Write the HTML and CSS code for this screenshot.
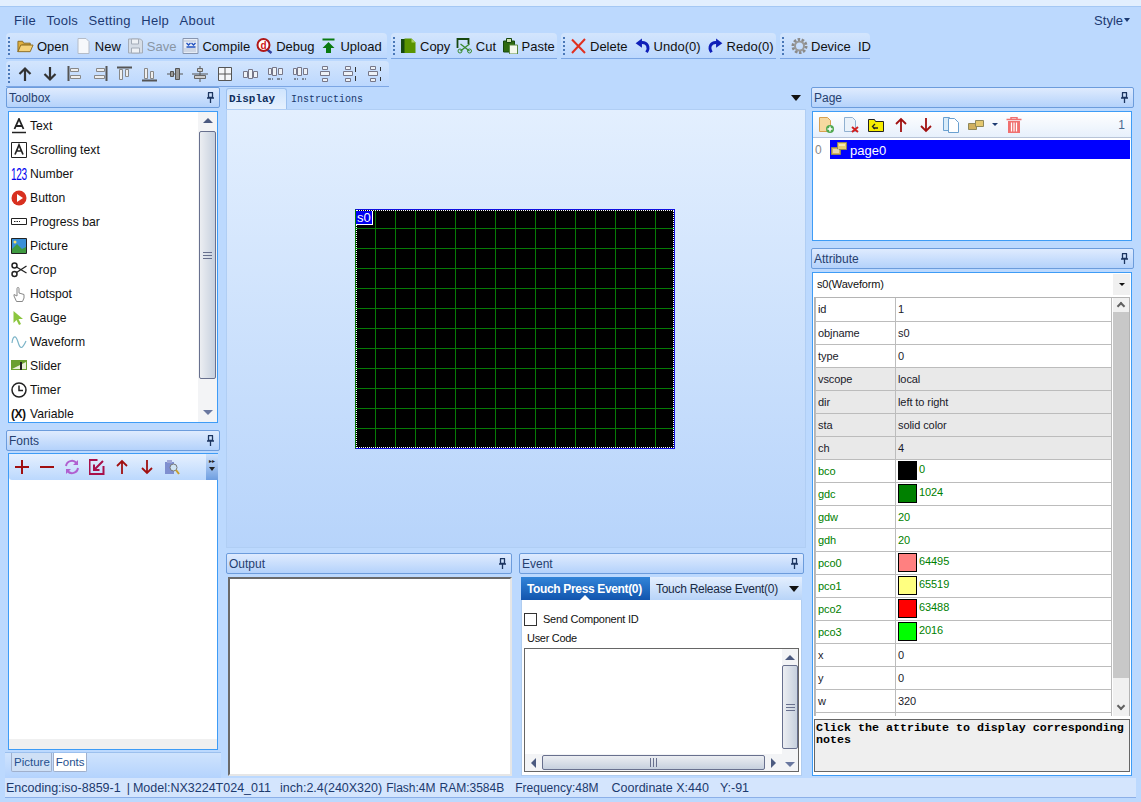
FILE: index.html
```html
<!DOCTYPE html>
<html>
  <head>
    <meta charset="UTF-8" />
    <title>Nextion Editor</title>
    <link rel="stylesheet" href="styles.css">
  </head>
  <body>
    <svg class="defs">
      <symbol id="pin" viewBox="0 0 9 11"><path d="M2 .5h5M2.5 .5v5h4v-5M1 6h7M4.5 6v5" fill="none" stroke="#1c3560" stroke-width="1.3"/></symbol>
      <symbol id="up-dark" viewBox="0 0 16 16"><path d="M8 15V3M2.5 8 8 2.5 13.500 8" fill="none" stroke="#333" stroke-width="2.200"/></symbol>
      <symbol id="down-dark" viewBox="0 0 16 16"><path d="M8 1v12M2.500 8 8 13.500 13.500 8" fill="none" stroke="#333" stroke-width="2.200"/></symbol>
      <symbol id="up-red" viewBox="0 0 16 16"><path d="M8 15V2M3 7l5-5 5 5" fill="none" stroke="#a01010" stroke-width="1.800"/></symbol>
      <symbol id="down-red" viewBox="0 0 16 16"><path d="M8 1v13M3 9l5 5 5-5" fill="none" stroke="#a01010" stroke-width="1.800"/></symbol>
    </svg>

    <div class="top-strip"></div>

    <nav class="menu-bar">
      <span>File</span><span>Tools</span><span>Setting</span><span>Help</span><span>About</span>
      <span class="menu-style">Style<i class="caret"></i></span>
    </nav>

    <div class="toolbar-row">
      <div class="toolbar tb-file">
        <i class="grip"></i>
        <a class="tool"><svg viewBox="0 0 18 16"><path d="M1 14V3h5l1 2h7v2H5z" fill="#e0b040" stroke="#8a6a20"/><path d="M1 14 4 7h13l-3 7z" fill="#f4d27a" stroke="#8a6a20"/></svg>Open</a>
        <a class="tool"><svg viewBox="0 0 16 16"><path d="M2.500 .5h8l3 3v12h-11z" fill="#f6f8fb" stroke="#b4bcc8"/></svg>New</a>
        <a class="tool disabled"><svg viewBox="0 0 16 16"><path d="M1 1h12l2 2v12H1z" fill="#d6dde6" stroke="#a4acb8"/><path d="M4 1h7v5H4zM4 10h8v5H4z" fill="#eef1f5" stroke="#a4acb8"/></svg>Save</a>
        <a class="tool"><svg viewBox="0 0 16 16"><path d="M.5 .5h15v15H.5z" fill="#e6ecf6" stroke="#8896b0"/><path d="M2 3h12M2 11h12M2 13h12" stroke="#8896b0" stroke-dasharray="1 1"/><path d="M4 5l2 2 2-2M9 5l2 2 2-2M4 9h9" fill="none" stroke="#2050c0" stroke-width="1.300"/></svg>Compile</a>
        <a class="tool"><svg viewBox="0 0 16 16"><path d="m10 11 5 4" stroke="#3040a0" stroke-width="2.500"/><circle cx="7" cy="7" r="6" fill="#fff" stroke="#b01818" stroke-width="2"/><text x="7" y="10.500" class="debug-d">d</text></svg>Debug</a>
        <a class="tool upload"><svg viewBox="0 0 14 16"><path d="M1 1.500h12" stroke="#0a7a10" stroke-width="2"/><path d="M7 4 13 10H9.500v5h-5v-5H1z" fill="#0a7a10"/></svg>Upload</a>
      </div>
      <div class="toolbar tb-edit">
        <i class="grip"></i>
        <a class="tool"><svg viewBox="0 0 16 16"><path d="M.5 1H5v14H.5z" fill="#17480f"/><path d="M4 .5h7l4 4V15H4z" fill="#5a9400"/><path d="M11 .5v4h4" fill="#a8d060"/></svg>Copy</a>
        <a class="tool"><svg viewBox="0 0 16 16"><path d="M1 10V1h11v5" fill="none" stroke="#17480f" stroke-width="1.800"/><path d="M4 6l9 7M13 6l-9 7" stroke="#3a8a30" stroke-width="1.300"/><circle cx="3.500" cy="13" r="2" fill="none" stroke="#3a8a30"/><circle cx="13" cy="13" r="2" fill="none" stroke="#3a8a30"/></svg>Cut</a>
        <a class="tool"><svg viewBox="0 0 16 16"><path d="M1 3h11v11H1z" fill="#2f6a10" stroke="#17480f"/><path d="M4 .5h5v4H4z" fill="#cfe0b0" stroke="#17480f"/><path d="M7 7h8v9H7z" fill="#f4f8ec" stroke="#5a8a40"/></svg>Paste</a>
      </div>
      <div class="toolbar tb-history">
        <i class="grip"></i>
        <a class="tool"><svg viewBox="0 0 16 16"><path d="M1.500 1.500 14.500 15M14.500 1 1.500 15" stroke="#e03020" stroke-width="2"/></svg>Delete</a>
        <a class="tool"><svg viewBox="0 0 14 14"><path d="M10.500 12.500C13.500 8 11 3.500 6 4" fill="none" stroke="#1020b8" stroke-width="2.500"/><path d="M1 4.500 6.500 .5v8z" fill="#1020b8"/></svg>Undo(0)</a>
        <a class="tool"><svg viewBox="0 0 14 14"><path d="M3.500 12.500C.5 8 3 3.500 8 4" fill="none" stroke="#1020b8" stroke-width="2.500"/><path d="M13 4.500 7.500 .5v8z" fill="#1020b8"/></svg>Redo(0)</a>
      </div>
      <div class="toolbar tb-device">
        <i class="grip"></i>
        <a class="tool"><svg viewBox="0 0 16 16"><circle cx="8" cy="8" r="6.500" fill="none" stroke="#8a8a8a" stroke-width="3" stroke-dasharray="2.500 1.500"/><circle cx="8" cy="8" r="4.500" fill="none" stroke="#999" stroke-width="2"/></svg>Device&nbsp; ID</a>
      </div>
    </div>

    <div class="toolbar tb-align">
      <i class="grip"></i>
      <a class="tool-sq"><svg viewBox="0 0 16 16"><use href="#up-dark"/></svg></a>
      <a class="tool-sq"><svg viewBox="0 0 16 16"><use href="#down-dark"/></svg></a>
      <a class="tool-sq"><svg viewBox="0 0 16 16"><path d="M1.500 0v15" stroke="#555" stroke-width="2"/><path d="M3.500 2.500h8v3h-8zM3.500 9.500h10v3h-10z" fill="#eee" stroke="#888"/></svg></a>
      <a class="tool-sq"><svg viewBox="0 0 16 16"><path d="M14.500 0v15" stroke="#555" stroke-width="2"/><path d="M4.500 2.500h8v3h-8zM2.500 9.500h10v3h-10z" fill="#eee" stroke="#888"/></svg></a>
      <a class="tool-sq"><svg viewBox="0 0 16 16"><path d="M0 1.500h15" stroke="#555" stroke-width="2"/><path d="M2.500 3.500h3v10h-3zM8.500 3.500h3v7h-3z" fill="#eee" stroke="#888"/></svg></a>
      <a class="tool-sq"><svg viewBox="0 0 16 16"><path d="M0 14.500h15" stroke="#555" stroke-width="2"/><path d="M2.500 2.500h3v10h-3zM8.500 5.500h3v7h-3z" fill="#eee" stroke="#888"/></svg></a>
      <a class="tool-sq"><svg viewBox="0 0 16 16"><path d="M0 8h16" stroke="#555"/><path d="M3.500 5.500h3v5h-3zM8.500 2.500h4v11h-4z" fill="#999" stroke="#555"/></svg></a>
      <a class="tool-sq"><svg viewBox="0 0 16 16"><path d="M8 0v16M0 8h16" stroke="#555"/><path d="M5.500 2.500h5v3h-5zM2.500 9.500h11v3h-11z" fill="#ccc" stroke="#666"/></svg></a>
      <a class="tool-sq"><svg viewBox="0 0 16 16"><path d="M1.500 1.500h13v13h-13z" fill="#f4f6f9" stroke="#555"/><path d="M8 2v12M2 8h12" stroke="#555"/></svg></a>
      <a class="tool-sq"><svg viewBox="0 0 16 16"><path d="M1.500 5.500h4v6h-4zM6.500 3.500h4v9h-4zM11.500 5.500h4v6h-4z" fill="#eef2f7" stroke="#778"/></svg></a>
      <a class="tool-sq"><svg viewBox="0 0 16 16"><path d="M1.500 2.500h3v6h-3zM5.500 1.500h4v8h-4zM11.500 2.500h4v6h-4z" fill="#eef2f7" stroke="#778"/><path d="M1 13h5M10 13h5" stroke="#333" stroke-dasharray="3 1"/></svg></a>
      <a class="tool-sq"><svg viewBox="0 0 16 16"><path d="M1.500 2.500h3v6h-3zM5.500 1.500h4v8h-4zM11.500 2.500h4v6h-4z" fill="#eef2f7" stroke="#778"/><path d="M2 13h4M10 13h4" stroke="#333" stroke-dasharray="2 1"/></svg></a>
      <a class="tool-sq"><svg viewBox="0 0 16 16"><path d="M5.500 .5h5v3h-5zM3.500 5.500h9v4h-9zM5.500 12.500h5v3h-5z" fill="#eef2f7" stroke="#778"/></svg></a>
      <a class="tool-sq"><svg viewBox="0 0 16 16"><path d="M3.500 .5h5v3h-5zM1.500 5.500h9v4h-9zM3.500 12.500h5v3h-5z" fill="#eef2f7" stroke="#778"/><path d="M13.500 1v5M13.500 10v5" stroke="#333"/></svg></a>
      <a class="tool-sq"><svg viewBox="0 0 16 16"><path d="M3.500 .5h5v3h-5zM1.500 5.500h9v4h-9zM3.500 12.500h5v3h-5z" fill="#eef2f7" stroke="#778"/><path d="M13.500 1v4M13.500 11v4" stroke="#333"/></svg></a>
    </div>

    <main class="workspace">
      <section class="col-left">
        <header class="panel-head">Toolbox<svg class="pin"><use href="#pin"/></svg></header>
        <div class="box toolbox">
          <ul class="tool-list">
            <li><svg viewBox="0 0 16 16"><path d="M3.500 11 8 1l4.500 10M5 8h6" fill="none" stroke="#222" stroke-width="1.800"/><path d="M1 14.500h14" stroke="#222" stroke-width="1.500"/></svg>Text</li>
            <li><svg viewBox="0 0 16 16"><path d="M.5 .5h15v15H.5z" fill="#fff" stroke="#222"/><path d="M4 12.500 8 3l4 9.500M5.500 9h5" fill="none" stroke="#222" stroke-width="1.700"/></svg>Scrolling text</li>
            <li><span class="num-glyph">123</span>Number</li>
            <li><svg viewBox="0 0 16 16"><circle cx="8" cy="8" r="7.500" fill="#d83020"/><path d="M6 4v8l6-4z" fill="#fff"/></svg>Button</li>
            <li><svg viewBox="0 0 16 16"><path d="M.5 4.500h15v6H.5z" fill="#fff" stroke="#222"/><path d="M3 7.500h6" stroke="#222" stroke-dasharray="1.500 1"/></svg>Progress bar</li>
            <li><svg viewBox="0 0 16 16"><path d="M.5 .5h15v15H.5z" fill="#3a90d8" stroke="#222"/><circle cx="4" cy="4" r="1.500" fill="#f4e070"/><path d="M1 15V11l5-5 5 5 4-2v6z" fill="#3f9a40"/></svg>Picture</li>
            <li><svg viewBox="0 0 16 16"><circle cx="3.500" cy="3.500" r="2.500" fill="none" stroke="#222" stroke-width="1.500"/><circle cx="3.500" cy="12" r="2.500" fill="none" stroke="#222" stroke-width="1.500"/><path d="m5.500 5 10 6M5.500 10.500 15.500 4" stroke="#222" stroke-width="1.300"/></svg>Crop</li>
            <li><svg viewBox="0 0 16 16"><path d="M6 8V2.500a1 1 0 0 1 2 0V7l5 1.500V12l-1.500 3.500h-6L3 10V8.500l3 1.500z" fill="#fff" stroke="#888"/></svg>Hotspot</li>
            <li><svg viewBox="0 0 16 16"><path d="M2.500 1v12l3-3 2.500 5 2-1-2.500-5H12z" fill="#8cc63f"/></svg>Gauge</li>
            <li><svg viewBox="0 0 16 16"><path d="M1 9C2 1 5 1 7 8s4 8 8-1" fill="none" stroke="#7cb4c8" stroke-width="1.200"/></svg>Waveform</li>
            <li><svg viewBox="0 0 16 16"><path d="M0 2h16v10H0z" fill="#6aa030"/><path d="M1 11 15 4v7z" fill="#e8f0d8"/><path d="M9 4h2v8H9z" fill="#222"/></svg>Slider</li>
            <li><svg viewBox="0 0 16 16"><circle cx="8" cy="8" r="7" fill="#fff" stroke="#222" stroke-width="1.500"/><path d="M8 3.500V8.500h4" fill="none" stroke="#222" stroke-width="1.500"/></svg>Timer</li>
            <li><span class="var-glyph">(X)</span>Variable</li>
          </ul>
          <div class="vscroll tool-scroll">
            <i class="arrow-up"></i>
            <div class="thumb"><i class="thumb-grip"></i></div>
            <i class="arrow-down"></i>
          </div>
        </div>

        <header class="panel-head fonts-head">Fonts<svg class="pin"><use href="#pin"/></svg></header>
        <div class="box fonts">
          <div class="mini-toolbar">
            <a class="tool-sq"><svg viewBox="0 0 16 16"><path d="M8 1v14M1 8h14" stroke="#a01010" stroke-width="2"/></svg></a>
            <a class="tool-sq"><svg viewBox="0 0 16 16"><path d="M1 8h14" stroke="#a01010" stroke-width="2"/></svg></a>
            <a class="tool-sq"><svg viewBox="0 0 16 16"><path d="M2 7a6 6 0 0 1 10.500-3M14 9a6 6 0 0 1-10.500 3" fill="none" stroke="#b060d0" stroke-width="2"/><path d="M14 1v5H9zM2 15v-5h5z" fill="#b060d0"/></svg></a>
            <a class="tool-sq"><svg viewBox="0 0 16 16"><path d="M14.500 7v8h-14V1h8" fill="none" stroke="#a8104a" stroke-width="2"/><path d="M14 2 5 11M5 5.500V11h5.500" fill="none" stroke="#a8104a" stroke-width="2"/></svg></a>
            <a class="tool-sq"><svg viewBox="0 0 16 16"><use href="#up-red"/></svg></a>
            <a class="tool-sq"><svg viewBox="0 0 16 16"><use href="#down-red"/></svg></a>
            <a class="tool-sq"><svg viewBox="0 0 16 16"><path d="M1 3h9v12H1z" fill="#7f8fd0"/><path d="M3 1h5v3H3z" fill="#a0a8d8"/><circle cx="9.500" cy="8.500" r="3.500" fill="#cfe4f4" stroke="#777"/><path d="m12 11 3 4" stroke="#c8a030" stroke-width="2"/></svg></a>
            <span class="overflow-btn"><i class="overflow-dots">▸▸</i><i class="overflow-caret"></i></span>
          </div>
          <div class="fonts-body"></div>
          <div class="fonts-foot"></div>
        </div>

        <div class="side-tabs">
          <span class="side-tab">Picture</span>
          <span class="side-tab on">Fonts</span>
        </div>
      </section>

      <section class="col-center">
        <div class="doc-tabs">
          <span class="doc-tab on">Display</span>
          <span class="doc-tab">Instructions</span>
          <i class="tab-menu"></i>
        </div>
        <div class="stage">
          <div class="canvas">
            <span class="comp-label">s0</span>
          </div>
        </div>
        <div class="bottom-panels">
          <div class="bottom-panel">
            <header class="panel-head">Output<svg class="pin"><use href="#pin"/></svg></header>
            <div class="output-box"></div>
          </div>
          <div class="bottom-panel">
            <header class="panel-head">Event<svg class="pin"><use href="#pin"/></svg></header>
            <div class="event-box">
              <div class="event-tabs">
                <span class="event-tab on">Touch Press Event(0)</span>
                <span class="event-tab">Touch Release Event(0)</span>
                <i class="tab-menu"></i>
              </div>
              <div class="event-body">
                <label class="send-id"><i class="check"></i>Send Component ID</label>
                <div class="code-label">User Code</div>
                <div class="code-box">
                  <div class="code-main">
                    <div class="code-area"></div>
                    <div class="hscroll">
                      <i class="arrow-left"></i>
                      <div class="hthumb"><i class="hthumb-grip"></i></div>
                      <i class="arrow-right"></i>
                    </div>
                  </div>
                  <div class="vscroll code-scroll">
                    <i class="arrow-up"></i>
                    <div class="thumb"><i class="thumb-grip"></i></div>
                    <i class="arrow-down"></i>
                  </div>
                </div>
              </div>
            </div>
          </div>
        </div>
      </section>

      <section class="col-right">
        <header class="panel-head">Page<svg class="pin"><use href="#pin"/></svg></header>
        <div class="box pages">
          <div class="page-toolbar">
            <a class="tool-sq"><svg viewBox="0 0 16 16"><path d="M1.500 .5h8l3 3v11h-11z" fill="#f6d9a0" stroke="#d8a050"/><circle cx="12" cy="12" r="4" fill="#50a850"/><path d="M12 9.500v5M9.500 12h5" stroke="#fff" stroke-width="1.500"/></svg></a>
            <a class="tool-sq"><svg viewBox="0 0 16 16"><path d="M1.500 .5h8l3 3v11h-11z" fill="#eaf2fa" stroke="#90b0d0"/><path d="m9 10 6 5M15 10l-6 5" stroke="#d02020" stroke-width="2"/></svg></a>
            <a class="tool-sq"><svg viewBox="0 0 16 16"><path d="M.5 2.500h6l1 2h8v10H.5z" fill="#f6ec00" stroke="#222"/><path d="M10 11H5M7 7 4.500 9.500 7 12" fill="none" stroke="#222" stroke-width="1.300"/></svg></a>
            <a class="tool-sq"><svg viewBox="0 0 16 16"><use href="#up-red"/></svg></a>
            <a class="tool-sq"><svg viewBox="0 0 16 16"><use href="#down-red"/></svg></a>
            <a class="tool-sq"><svg viewBox="0 0 16 16"><path d="M.5 .5h6v13h-6z" fill="#d8ecfa" stroke="#6aa0d0"/><path d="M5.500 1.500h6l4 4v10h-10z" fill="#fff" stroke="#6aa0d0"/></svg></a>
            <a class="tool-sq"><svg viewBox="0 0 16 16"><path d="M.5 6.500h8v6h-8z" fill="#d0b060" stroke="#90885a"/><path d="M7.500 3.500h8v6h-8z" fill="#e4c870" stroke="#90885a"/></svg></a>
            <i class="page-caret"></i>
            <a class="tool-sq trash"><svg viewBox="0 0 16 16"><path d="M5 2V.5h6V2M.5 2.500h15" fill="none" stroke="#f07070" stroke-width="1.500"/><path d="M2 4h12v12H2z" fill="#f07070"/><path d="M5.500 5.500v9M8 5.500v9M10.500 5.500v9" stroke="#fff" stroke-width="1.200"/></svg></a>
            <span class="page-count">1</span>
          </div>
          <div class="page-row">
            <span class="page-no">0</span>
            <div class="page-item">
              <svg viewBox="0 0 16 13"><path d="M.5 5.500h9v7h-9z" fill="#d0b060" stroke="#90885a"/><path d="M6.500 .5h9v7h-9z" fill="#e8cc70" stroke="#90885a"/><path d="M2 8h6M2 10h6M8 3h6" stroke="#fff"/></svg>
              page0
            </div>
          </div>
        </div>

        <header class="panel-head attr-head">Attribute<svg class="pin"><use href="#pin"/></svg></header>
        <div class="box attrs">
          <div class="combo">s0(Waveform)<span class="combo-btn"><i class="caret-dark"></i></span></div>
          <div class="attr-wrap">
            <div class="attr-scrollpane">
              <table class="attr-table">
                <tr><td>id</td><td>1</td></tr>
                <tr><td>objname</td><td>s0</td></tr>
                <tr><td>type</td><td>0</td></tr>
                <tr class="ro"><td>vscope</td><td>local</td></tr>
                <tr class="ro"><td>dir</td><td>left to right</td></tr>
                <tr class="ro"><td>sta</td><td>solid color</td></tr>
                <tr class="ro"><td>ch</td><td>4</td></tr>
                <tr class="live"><td>bco</td><td><i class="swatch c-black"></i>0</td></tr>
                <tr class="live"><td>gdc</td><td><i class="swatch c-green"></i>1024</td></tr>
                <tr class="live"><td>gdw</td><td>20</td></tr>
                <tr class="live"><td>gdh</td><td>20</td></tr>
                <tr class="live"><td>pco0</td><td><i class="swatch c-pink"></i>64495</td></tr>
                <tr class="live"><td>pco1</td><td><i class="swatch c-yellow"></i>65519</td></tr>
                <tr class="live"><td>pco2</td><td><i class="swatch c-red"></i>63488</td></tr>
                <tr class="live"><td>pco3</td><td><i class="swatch c-lime"></i>2016</td></tr>
                <tr><td>x</td><td>0</td></tr>
                <tr><td>y</td><td>0</td></tr>
                <tr><td>w</td><td>320</td></tr>
                <tr><td></td><td></td></tr>
              </table>
            </div>
            <div class="attr-scroll">
              <i class="chev-up"></i>
              <div class="attr-thumb"></div>
              <i class="chev-down"></i>
            </div>
          </div>
          <div class="notes">Click the attribute to display corresponding notes</div>
        </div>
      </section>
    </main>

    <footer class="status-bar">
      <span>Encoding:iso-8859-1</span>
      <span class="st-sep">|</span>
      <span class="st-model">Model:NX3224T024_011</span>
      <span class="st-inch">inch:2.4(240X320)</span>
      <span class="st-flash">Flash:4M</span>
      <span class="st-ram">RAM:3584B</span>
      <span class="st-freq">Frequency:48M</span>
      <span class="st-coord">Coordinate X:440</span>
      <span class="st-y">Y:-91</span>
    </footer>
  </body>
</html>
```

FILE: styles.css
```css
* {
  margin: 0;
  padding: 0;
  box-sizing: border-box;
}
html, body {
  height: 100%;
}
body {
  width: 1141px;
  height: 802px;
  overflow: hidden;
  background: #bcd9fe;
  font-family: "Liberation Sans", Arial, sans-serif;
  font-size: 12px;
  color: #111;
}
i {
  display: block;
  font-style: normal;
}
.defs {
  display: none;
}

/* top area */
.top-strip {
  height: 7px;
  background: #e2effe;
  border-bottom: 1px solid #a4c8f4;
}
.menu-bar {
  height: 26px;
  display: flex;
  align-items: center;
  gap: 10.500px;
  padding: 0 11px 0 14px;
  font-size: 13px;
  letter-spacing: 0.25px;
  color: #1c3a72;
}
.menu-style {
  margin-left: auto;
  display: flex;
  align-items: center;
  letter-spacing: 0;
}
.caret {
  margin-left: 1px;
  border: 3.5px solid transparent;
  border-top: 4px solid #1c3a72;
  border-bottom: 0;
}
.toolbar-row {
  display: flex;
  gap: 4px;
  padding-left: 6px;
}
.toolbar {
  height: 26px;
  display: flex;
  align-items: center;
  padding-top: 1px;
  border-radius: 4px 4px 0 0;
  border-bottom: 1px solid #7ca6e4;
  background: linear-gradient(#d3e5fd, #bcd8fe);
  font-size: 13px;
  color: #111;
}
.grip {
  width: 2px;
  height: 18px;
  flex: none;
  margin: 0 7px 0 2px;
  background: repeating-linear-gradient(#4a78b8 0 2px, transparent 2px 4px);
}
.tool {
  display: flex;
  align-items: center;
  gap: 3px;
  margin-right: 6px;
  white-space: nowrap;
}
.tool:last-child {
  margin-right: 0;
}
.tool svg {
  width: 17px;
  height: 16px;
  flex: none;
}
.tool.disabled {
  color: #8a96a4;
}
.debug-d {
  font: bold 10px "Liberation Sans", sans-serif;
  fill: #d01818;
  text-anchor: middle;
}
.tb-file {
  width: 381px;
  flex: none;
}
.tb-edit {
  width: 166px;
  flex: none;
}
.tb-history {
  width: 215px;
  flex: none;
}
.tb-device {
  width: 90px;
  flex: none;
}
.tb-edit .grip {
  margin-right: 5px;
}
.tb-edit .tool {
  margin-right: 5.500px;
}
.tb-edit .tool:last-child {
  margin-right: 0;
}
.tb-history .grip {
  margin-right: 5px;
}
.tb-device .grip {
  margin-right: 5px;
}
.tb-device .tool {
  margin-left: 2px;
}
.tb-align {
  width: 383px;
  margin: 2px 0 0 6px;
  padding-top: 0;
}
.tb-align .grip {
  margin-right: 2px;
}
.tool-sq {
  width: 25px;
  height: 16px;
  flex: none;
  display: flex;
  justify-content: center;
}
.tool-sq svg {
  width: 16px;
  height: 16px;
}

/* main columns */
.workspace {
  height: 691px;
  display: grid;
  grid-template-columns: 214px 1fr 323px;
  padding: 0 7px 0 6px;
}
.col-left, .col-right {
  display: flex;
  flex-direction: column;
  min-height: 0;
}
.col-center {
  display: flex;
  flex-direction: column;
  margin: 0 5px 0 6px;
  min-height: 0;
}
.panel-head {
  height: 21px;
  flex: none;
  display: flex;
  align-items: center;
  justify-content: space-between;
  padding: 0 4px 0 2px;
  border: 1px solid #6c9cdc;
  border-radius: 2px;
  background: linear-gradient(#dfebfe, #b4d2fb);
  color: #26406f;
}
.pin {
  width: 9px;
  height: 11px;
}
.box {
  background: #fff;
  border: 1px solid #3e9cf6;
}

/* toolbox */
.toolbox {
  height: 312px;
  margin: 3px 2px 0;
  display: flex;
  flex: none;
}
.tool-list {
  flex: 1;
  list-style: none;
  padding-top: 2px;
  overflow: hidden;
  font-size: 12.200px;
}
.tool-list li {
  height: 24px;
  display: flex;
  align-items: center;
  gap: 3px;
  padding-left: 2px;
}
.tool-list svg {
  width: 16px;
  height: 16px;
  flex: none;
}
.num-glyph {
  width: 16px;
  color: #0000f0;
  font-size: 14px;
  letter-spacing: -0.5px;
  white-space: nowrap;
  transform: scale(0.72, 1.2);
  transform-origin: left center;
}
.var-glyph {
  width: 16px;
  font-weight: bold;
  font-size: 12px;
  letter-spacing: -0.500px;
  white-space: nowrap;
}
.vscroll {
  display: flex;
  flex-direction: column;
  align-items: center;
  background: #f3f4f6;
}
.tool-scroll {
  width: 19px;
  padding: 6px 1px 7px;
}
.tool-scroll .thumb {
  margin: 8px 0 0;
  height: 248px;
}
.thumb {
  width: 100%;
  flex: none;
  display: flex;
  align-items: center;
  justify-content: center;
  border: 1px solid #68708e;
  border-radius: 2px;
  background: linear-gradient(to right, #eceef2, #c6d0de);
}
.thumb-grip {
  width: 9px;
  height: 7px;
  background: repeating-linear-gradient(#68708e 0 1px, transparent 1px 3px);
}
.arrow-up {
  border: 5px solid transparent;
  border-bottom: 5px solid #4c5a80;
  border-top: 0;
  flex: none;
}
.arrow-down {
  margin-top: auto;
  border: 5px solid transparent;
  border-top: 5px solid #6a78a0;
  border-bottom: 0;
  flex: none;
}

/* fonts */
.fonts-head {
  margin-top: 7px;
}
.fonts {
  flex: 1;
  min-height: 0;
  margin: 2px 2px 0;
  display: flex;
  flex-direction: column;
}
.mini-toolbar {
  height: 26px;
  flex: none;
  display: flex;
  align-items: center;
  border-radius: 0 0 3px 3px;
  background: linear-gradient(#e6f0fe, #bbd8fd);
}
.overflow-btn {
  width: 12px;
  height: 26px;
  margin-left: auto;
  margin-right: -1px;
  background: linear-gradient(#cfe2fc, #6e9ee0);
  display: flex;
  flex-direction: column;
  align-items: center;
}
.overflow-dots {
  font-size: 6px;
  color: #222;
  margin-top: 3px;
}
.overflow-caret {
  margin-top: 3px;
  border: 3.500px solid transparent;
  border-top: 4px solid #222;
  border-bottom: 0;
}
.fonts-body {
  flex: 1;
}
.fonts-foot {
  height: 10px;
  background: #f0f0f0;
}
.side-tabs {
  height: 26px;
  flex: none;
  margin: 2px -1px 0 -1px;
  padding: 0 0 0 6px;
  display: flex;
  gap: 1px;
  align-items: flex-start;
  background: linear-gradient(#cfe3fd, #b4d3fd);
  border-top: 1px solid #9cc0ee;
  font-size: 11.500px;
}
.side-tab {
  height: 19px;
  padding: 0 1px 0 2px;
  line-height: 18px;
  color: #26508f;
  background: #cfe0f6;
  border: 1px solid #a0b0cc;
  border-top: 0;
  border-radius: 0 0 2px 2px;
}
.side-tab.on {
  background: #fff;
}

/* center */
.doc-tabs {
  height: 22px;
  flex: none;
  display: flex;
  align-items: flex-end;
  padding-top: 1px;
}
.doc-tab {
  height: 21px;
  line-height: 23px;
  padding: 0 4px;
  font-family: "Liberation Mono", monospace;
  font-size: 10px;
  color: #1a3a6e;
}
.doc-tab.on {
  width: 61px;
  padding-left: 2px;
  line-height: 21px;
  font-weight: bold;
  font-size: 11px;
  background: linear-gradient(#cfe4fd, #e6f1fe);
  border: 1px solid #9cc0ee;
  border-bottom: 0;
  border-radius: 3px 3px 0 0;
  color: #10305e;
}
.tab-menu {
  border: 5px solid transparent;
  border-top: 6px solid #111;
  border-bottom: 0;
  margin-left: auto;
  margin-right: 5px;
  margin-bottom: 2px;
  align-self: center;
}
.stage {
  height: 439px;
  flex: none;
  display: flex;
  align-items: center;
  justify-content: center;
  padding-right: 2px;
  border: 1px solid #b0cef4;
  background: linear-gradient(#e3effe, #b7d4fb);
}
.canvas {
  width: 320px;
  height: 240px;
  position: relative;
  border: 1px solid #1010e0;
  border-left-color: #067a06;
  background-color: #000;
  background-image: linear-gradient(to right, #067a06 1px, transparent 1px), linear-gradient(to bottom, #067a06 1px, transparent 1px);
  background-size: 20px 20px;
  background-position: 0 -1px;
  background-origin: border-box;
}
.canvas::before {
  content: "";
  position: absolute;
  inset: 0;
  border: 1px dotted #fff;
}
.comp-label {
  position: absolute;
  left: 0;
  top: 1px;
  width: 17px;
  height: 14px;
  line-height: 13px;
  padding-left: 1px;
  background: #0000f0;
  border: 1px solid #fff;
  border-top: 0;
  border-left: 0;
  color: #fff;
  font-size: 13px;
}
.bottom-panels {
  flex: 1;
  min-height: 0;
  margin-top: 5px;
  padding-right: 2px;
  display: grid;
  grid-template-columns: 286px 285px;
  gap: 7px;
}
.bottom-panel {
  display: flex;
  flex-direction: column;
  height: 223px;
}
.output-box {
  flex: 1;
  margin: 3px 0 0 2px;
  background: #fff;
  border: 2px solid #6a6a6a;
  border-right-color: #e6e6e6;
  border-bottom-color: #e6e6e6;
}
.event-box {
  flex: 1;
  margin: 3px 2px 0;
  display: flex;
  flex-direction: column;
  min-height: 0;
}
.event-tabs {
  height: 23px;
  flex: none;
  display: flex;
  align-items: stretch;
  background: linear-gradient(#e4effe, #b8d4f8);
}
.event-tab {
  line-height: 24px;
  padding: 0 7px 0 6px;
  color: #1a2a44;
  letter-spacing: -0.28px;
  white-space: nowrap;
}
.event-tab.on {
  width: 129px;
  position: relative;
  font-weight: bold;
  letter-spacing: -0.35px;
  color: #fff;
  background: linear-gradient(#3284d8, #1255ae);
}
.event-tab.on::after {
  content: "";
  position: absolute;
  left: 59px;
  bottom: 0;
  border: 5px solid transparent;
  border-bottom: 5px solid #fff;
  border-top: 0;
}
.event-tabs .tab-menu {
  margin-right: 3px;
  margin-bottom: 0;
}
.event-body {
  flex: 1;
  background: #fff;
  border: 1px solid #b0cdf0;
  border-top: 0;
  padding: 12px 2px 3px 2px;
  display: flex;
  flex-direction: column;
  min-height: 0;
}
.send-id {
  display: flex;
  align-items: center;
  gap: 6px;
  height: 14px;
  font-size: 11px;
  letter-spacing: -0.25px;
}
.check {
  width: 13px;
  height: 13px;
  border: 1px solid #333;
  background: #fff;
}
.code-label {
  margin: 5px 0 3px 3px;
  line-height: 14px;
  font-size: 11px;
  letter-spacing: -0.3px;
}
.code-box {
  flex: 1;
  min-height: 0;
  border: 1px solid #666;
  display: flex;
}
.code-main {
  flex: 1;
  display: flex;
  flex-direction: column;
}
.code-area {
  flex: 1;
}
.hscroll {
  height: 17px;
  display: flex;
  align-items: center;
  padding: 0 6px;
  background: #f3f4f6;
}
.hthumb {
  flex: 1;
  height: 15px;
  margin: 0 6px;
  display: flex;
  align-items: center;
  justify-content: center;
  border: 1px solid #68708e;
  border-radius: 2px;
  background: linear-gradient(#eceef2, #c6d0de);
}
.hthumb-grip {
  width: 7px;
  height: 9px;
  background: repeating-linear-gradient(to right, #68708e 0 1px, transparent 1px 3px);
}
.arrow-left {
  border: 5px solid transparent;
  border-right: 5px solid #4c5a80;
  border-left: 0;
}
.arrow-right {
  border: 5px solid transparent;
  border-left: 5px solid #4c5a80;
  border-right: 0;
}
.code-scroll {
  width: 16px;
  padding: 6px 0 4px;
}
.code-scroll .thumb {
  margin-top: 5px;
  height: 84px;
}

/* right */
.pages {
  height: 130px;
  margin: 3px 2px 0 1px;
  flex: none;
}
.page-toolbar {
  height: 26px;
  display: flex;
  align-items: center;
  border-bottom: 1px solid #b8c4d8;
  background: linear-gradient(#fff, #e7f0fc);
}
.page-caret {
  margin: 0 4px 0 4px;
  border: 3px solid transparent;
  border-top: 3px solid #1c3a72;
  border-bottom: 0;
}
.page-toolbar .trash {
  width: 23px;
}
.page-count {
  margin-left: auto;
  margin-right: 6px;
  color: #4a6a90;
}
.page-row {
  display: flex;
  margin-top: 2px;
  align-items: center;
}
.page-no {
  width: 17px;
  padding-left: 2px;
  color: #888;
}
.page-item {
  width: 300px;
  height: 19px;
  display: flex;
  align-items: center;
  gap: 3px;
  padding: 2px 0 0 1px;
  background: #0000ff;
  color: #fff;
  font-size: 13px;
}
.page-item svg {
  width: 16px;
  height: 13px;
  margin-top: -5px;
}
.attr-head {
  margin-top: 7px;
}
.attrs {
  height: 504px;
  flex: none;
  margin: 3px 2px 0 1px;
  padding: 1px;
  display: flex;
  flex-direction: column;
}
.combo {
  height: 22px;
  flex: none;
  display: flex;
  align-items: center;
  justify-content: space-between;
  padding: 0 0 2px 3px;
  font-size: 11px;
  letter-spacing: -0.15px;
}
.combo-btn {
  width: 17px;
  height: 21px;
  display: flex;
  align-items: center;
  justify-content: center;
  background: #f0f0f0;
}
.caret-dark {
  border: 3px solid transparent;
  border-top: 3px solid #111;
  border-bottom: 0;
}
.attr-wrap {
  height: 419px;
  flex: none;
  display: flex;
  margin-top: 1px;
  border: 1px solid #b4b4b4;
  border-bottom: 0;
}
.attr-scrollpane {
  width: 298px;
  overflow: hidden;
}
.attr-table {
  width: 297px;
  border-collapse: collapse;
  table-layout: fixed;
  font-size: 11px;
}
.attr-table td {
  height: 23px;
  padding: 0 0 0 2px;
  border: 1px solid #bcbcbc;
  color: #1a1a2a;
  letter-spacing: -0.08px;
  white-space: nowrap;
}
.attr-table td:first-child {
  width: 80px;
}
.attr-table tr:first-child td {
  border-top: 0;
}
.attr-table .ro td {
  background: #e9e9e9;
}
.attr-table .live td {
  color: #008000;
}
.swatch {
  display: inline-block;
  width: 19px;
  height: 19px;
  margin-right: 2px;
  vertical-align: middle;
  border: 1px solid #000;
}
.c-black { background: #000; }
.c-green { background: #008000; }
.c-pink { background: #ff8080; }
.c-yellow { background: #ffff80; }
.c-red { background: #ff0000; }
.c-lime { background: #00ff00; }
.attr-scroll {
  flex: 1;
  display: flex;
  flex-direction: column;
  align-items: center;
  background: #f0f0f0;
  padding-bottom: 7px;
}
.attr-thumb {
  width: 100%;
  height: 366px;
  margin-top: 3px;
  background: #c8c8c8;
}
.chev-up, .chev-down {
  width: 6px;
  height: 6px;
  border-left: 2px solid #606060;
  border-bottom: 2px solid #606060;
  flex: none;
}
.chev-up {
  margin-top: 5px;
  transform: rotate(135deg);
}
.chev-down {
  margin-top: auto;
  transform: rotate(-45deg);
}
.notes {
  flex: 1;
  margin: 3px 0 2px;
  padding: 2px 1px;
  background: #efefef;
  border: 1px solid #666;
  font-family: "Liberation Mono", monospace;
  font-weight: bold;
  font-size: 11.670px;
  line-height: 12px;
  color: #000;
}

/* status */
.status-bar {
  height: 20px;
  width: 1131px;
  margin-left: 5px;
  padding-left: 1px;
  display: flex;
  gap: 6px;
  line-height: 20px;
  font-size: 12.500px;
  color: #1c3a6e;
  background: #d4e5fd;
  border-bottom: 1px solid #8cb0e8;
  white-space: nowrap;
}
.st-sep {
  margin-right: -3px;
}
.st-inch {
  margin-left: 3px;
}
.st-flash, .st-ram, .st-freq {
  font-size: 12px;
}
.st-flash, .st-ram {
  margin-left: -2px;
}
.st-freq {
  margin-left: 5px;
}
.st-coord {
  margin-left: 7px;
}
.st-y {
  margin-left: 5px;
}
```
